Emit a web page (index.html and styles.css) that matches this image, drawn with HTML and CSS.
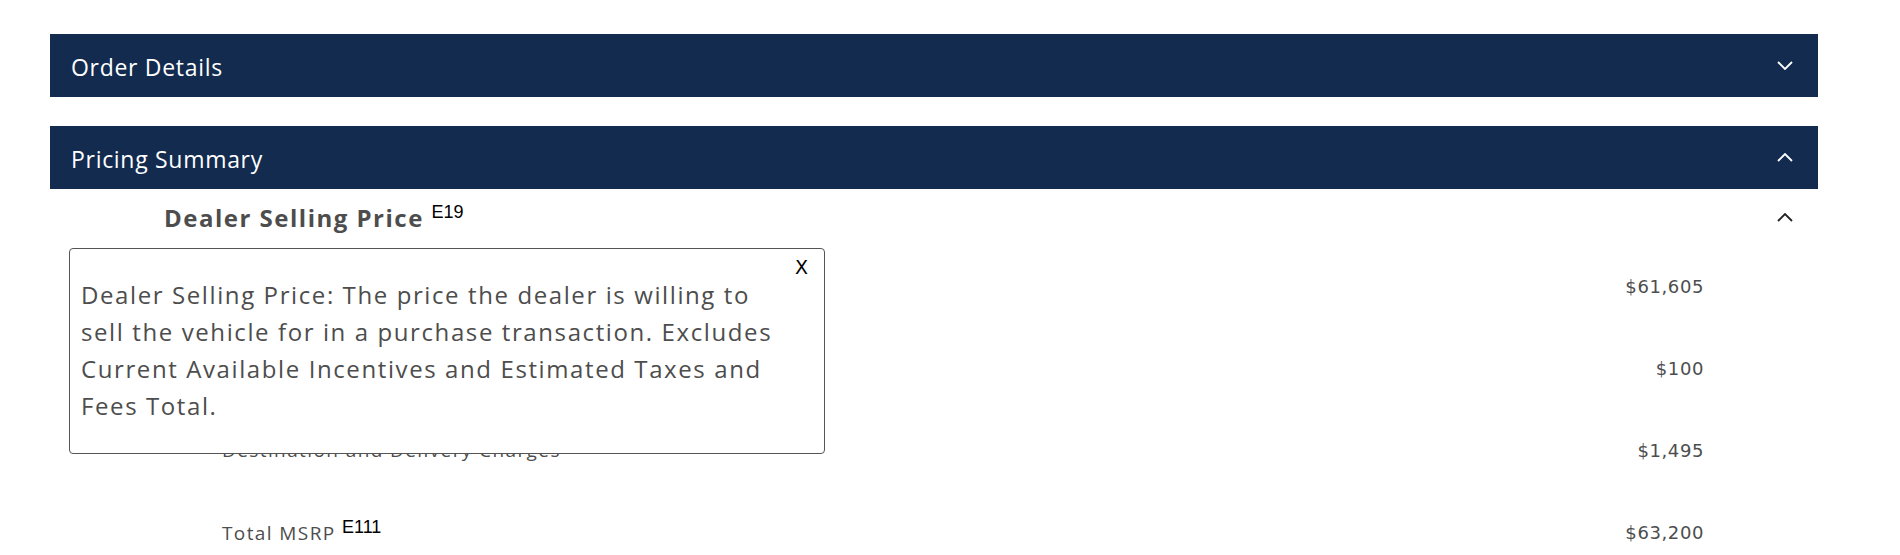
FILE: index.html
```html
<!doctype html>
<html lang="en">
<head>
    <meta charset="utf-8">
    <title>Order Summary</title>
    <link rel="stylesheet" href="styles.css">
</head>
<body>
    <main class="summary">
        <section class="panel">
            <button class="panel-header" type="button">
                <span>Order Details</span>
                <svg class="chevron" width="16" height="9" viewBox="0 0 16 9"><polyline points="1,1 8,8 15,1"/></svg>
            </button>
        </section>

        <section class="panel">
            <button class="panel-header" type="button">
                <span>Pricing Summary</span>
                <svg class="chevron" width="16" height="9" viewBox="0 0 16 9"><polyline points="1,8 8,1 15,8"/></svg>
            </button>

            <div class="panel-body">
                <div class="price-group">
                    <h3 class="price-group-title">Dealer Selling Price <sup class="note">E19</sup></h3>
                    <svg class="chevron chevron-dark" width="16" height="9" viewBox="0 0 16 9"><polyline points="1,8 8,1 15,8"/></svg>
                </div>

                <ul class="price-lines">
                    <li><span class="label">Base MSRP</span><span class="value">$61,605</span></li>
                    <li><span class="label">Options</span><span class="value">$100</span></li>
                    <li><span class="label">Destination and Delivery Charges</span><span class="value">$1,495</span></li>
                    <li><span class="label">Total MSRP <sup class="note">E111</sup></span><span class="value">$63,200</span></li>
                </ul>

                <div class="tooltip" role="dialog">
                    <button class="tooltip-close" type="button">X</button>
                    <p>Dealer Selling Price: The price the dealer is willing to sell the vehicle for in a purchase transaction. Excludes Current Available Incentives and Estimated Taxes and Fees Total.</p>
                </div>
            </div>
        </section>
    </main>
</body>
</html>
```

FILE: styles.css
```css
/* reset stuff */
html {
    box-sizing: border-box;
}

*, *:before, *:after {
    box-sizing: inherit;
}

body, h3, p, ul {
    margin: 0;
    padding: 0;
    font-weight: normal;
}

ul {
    list-style-type: none;
}

button {
    font: inherit;
    border: 0;
    background: none;
    padding: 0;
    cursor: pointer;
}

/* actual css */
:root {
    --navy: #122b4f;
    --text-color: #4d4d4d;
}

body {
    font-family: "Open Sans", "Noto Sans", sans-serif;
    color: var(--text-color);
    background: #fff;
}

.summary {
    padding: 34px 82px 0 50px;
}

.panel + .panel {
    margin-top: 29px;
}

.panel-header {
    display: flex;
    align-items: center;
    justify-content: space-between;
    width: 100%;
    height: 63px;
    padding: 3px 25px 0 21px;
    background: var(--navy);
    color: #fff;
    font-size: 23px;
    letter-spacing: 0.7px;
    text-align: left;
}

.panel-header .chevron {
    margin-top: -3px;
}

.chevron {
    fill: none;
    stroke: #fff;
    stroke-width: 1.8;
}

.chevron-dark {
    stroke: #222;
}

.panel-body {
    position: relative;
}

.price-group {
    display: flex;
    align-items: center;
    justify-content: space-between;
    height: 56px;
    padding: 0 25px 0 114px;
}

.price-group-title {
    font-size: 24px;
    font-weight: bold;
    letter-spacing: 1.5px;
}

.note {
    font-family: "Liberation Sans", Arial, sans-serif;
    font-size: 18px;
    font-weight: normal;
    letter-spacing: 0;
    color: #000;
}

.price-lines li {
    display: flex;
    justify-content: space-between;
    align-items: center;
    height: 82px;
    padding: 0 114px 0 172px;
    font-size: 19px;
}

.label {
    letter-spacing: 1.4px;
}

.value {
    font-family: "DejaVu Sans", sans-serif;
    font-size: 18px;
    letter-spacing: 0.6px;
}

.tooltip {
    position: absolute;
    top: 59px;
    left: 19px;
    width: 756px;
    height: 206px;
    padding: 27px 40px 0 11px;
    background: #fff;
    border: 1px solid #555;
    border-radius: 4px;
}

.tooltip p {
    font-size: 24px;
    line-height: 37px;
    letter-spacing: 1.6px;
}

.tooltip-close {
    position: absolute;
    top: 7px;
    right: 16px;
    font-family: "DejaVu Sans", sans-serif;
    font-size: 19px;
    color: #000;
}
```
